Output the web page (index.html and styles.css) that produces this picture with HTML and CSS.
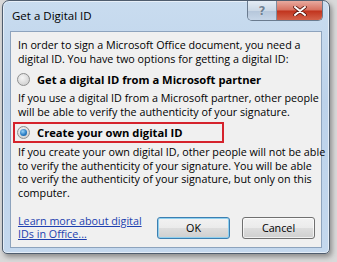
FILE: index.html
```html
<!DOCTYPE html>
<html>
<head>
<meta charset="utf-8">
<link rel="stylesheet" href="styles.css">
</head>
<body>
<div class="window">
  <div class="titlebar">
    <span class="title">Get a Digital ID</span>
    <div class="caption-buttons">
      <div class="cap help">?</div>
      <div class="cap close">
        <svg width="14" height="10" viewBox="0 0 14 10"><path d="M2 1 L12 9 M12 1 L2 9" stroke="#5a1a12" stroke-width="3.6" stroke-linecap="round"/><path d="M2 1 L12 9 M12 1 L2 9" stroke="#ffffff" stroke-width="2" stroke-linecap="round"/></svg>
      </div>
    </div>
  </div>
  <div class="client">
    <p class="text intro">In order to sign a Microsoft Office document, you need a<br>digital ID. You have two options for getting a digital ID:</p>
    <div class="option first">
      <span class="radio"></span>
      <span class="opt-label">Get a digital ID from a Microsoft partner</span>
    </div>
    <p class="text desc1">If you use a digital ID from a Microsoft partner, other people<br>will be able to verify the authenticity of your signature.</p>
    <div class="highlight">
      <div class="option">
        <span class="radio checked"></span>
        <span class="opt-label">Create your own digital ID</span>
      </div>
    </div>
    <p class="text desc2">If you create your own digital ID, other people will not be able<br>to verify the authenticity of your signature. You will be able<br>to verify the authenticity of your signature, but only on this<br>computer.</p>
    <div class="footer">
      <a class="link" href="#">Learn more about digital<br>IDs in Office...</a>
      <div class="buttons">
        <button class="btn default">OK</button>
        <button class="btn">Cancel</button>
      </div>
    </div>
  </div>
</div>
</body>
</html>
```

FILE: styles.css
```css
html, body {
  margin: 0;
  padding: 0;
}
body {
  width: 337px;
  height: 262px;
  background: #d9d9d9;
  font-family: "Open Sans", "Noto Sans", sans-serif;
  font-size: 10.75px;
  color: #000;
  overflow: hidden;
}
.window {
  box-sizing: border-box;
  width: 328px;
  height: 254px;
  margin: 0 0 0 2px;
  border: 1px solid #4f5d6e;
  border-radius: 7px 7px 5px 5px;
  background: linear-gradient(180deg, #c9dcef 0%, #bcd2ea 40%, #c4d8ee 100%);
  box-shadow: 2px 3px 5px rgba(0,0,0,0.35), inset 0 0 0 1px rgba(255,255,255,0.55);
  display: flex;
  flex-direction: column;
}
.titlebar {
  height: 30px;
  flex-shrink: 0;
  display: flex;
  align-items: flex-start;
}
.title {
  margin: 7px 0 0 9px;
  font-size: 11.5px;
  color: #000;
  white-space: nowrap;
}
.caption-buttons {
  margin-left: auto;
  margin-right: 6px;
  display: flex;
  border: 1px solid #6a7b8f;
  border-top: none;
  border-radius: 0 0 5px 5px;
  overflow: hidden;
}
.cap {
  height: 19px;
  display: flex;
  align-items: center;
  justify-content: center;
}
.help {
  width: 28px;
  background: linear-gradient(180deg, #e3ebf4 0%, #cbd8e6 50%, #b5c6da 52%, #c6d6e8 100%);
  border-right: 1px solid #7d8da0;
  color: #6f8193;
  font-family: "DejaVu Sans", sans-serif;
  font-weight: bold;
  font-size: 12px;
  text-shadow: 0 0 1px #fff;
}
.close {
  width: 45px;
  background: linear-gradient(180deg, #e8aa9f 0%, #d7705f 48%, #c1331d 52%, #d4624a 100%);
}
.client {
  flex: 1;
  min-height: 0;
  margin: 0 7px 5px 7px;
  border: 1px solid #8da3bd;
  background: #f0f0f0;
  padding: 7px 6px 6px 7px;
  display: flex;
  flex-direction: column;
}
.text {
  margin: 0;
  line-height: 13.5px;
  white-space: nowrap;
}
.desc1 {
  margin-top: 4px;
}
.desc2 {
  margin-top: 3px;
}
.option {
  display: flex;
  align-items: center;
  height: 17px;
  white-space: nowrap;
}
.option.first {
  margin-top: 5px;
}
.radio {
  box-sizing: border-box;
  flex-shrink: 0;
  width: 13px;
  height: 13px;
  border-radius: 50%;
  border: 1px solid #8e8f8f;
  background: radial-gradient(circle at 40% 35%, #f6f6f6 0%, #dcdcdc 55%, #c9c9c9 100%);
  margin-left: -1px;
  margin-right: 7px;
  display: flex;
  align-items: center;
  justify-content: center;
}
.radio.checked::after {
  content: "";
  width: 7px;
  height: 7px;
  border-radius: 50%;
  background: radial-gradient(circle at 40% 35%, #9cd4f7 0%, #2b7fc6 55%, #0f4f91 100%);
}
.opt-label {
  font-weight: bold;
  font-size: 11.2px;
}
.highlight {
  margin: 3px 0 0 -5px;
  width: 204px;
  border: 2px solid #d5232c;
  padding: 0 0 0 3px;
}
.footer {
  margin-top: auto;
  display: flex;
  align-items: center;
}
.link {
  flex-shrink: 0;
  color: #1d3faf;
  text-decoration: underline;
  line-height: 13px;
  white-space: nowrap;
}
.buttons {
  margin-left: auto;
  display: flex;
  gap: 12px;
}
.btn {
  box-sizing: border-box;
  width: 73px;
  height: 22px;
  border: 1px solid #707070;
  border-radius: 3px;
  background: linear-gradient(180deg, #f2f2f2 0%, #ebebeb 48%, #dddddd 52%, #cfcfcf 100%);
  font-family: "Open Sans", "Noto Sans", sans-serif;
  font-size: 10.75px;
  color: #000;
  padding: 0;
  box-shadow: inset 0 0 0 1px rgba(255,255,255,0.7);
}
.btn.default {
  border-color: #3c7fb1;
  box-shadow: inset 0 0 0 1px #90d0ef;
}
```
